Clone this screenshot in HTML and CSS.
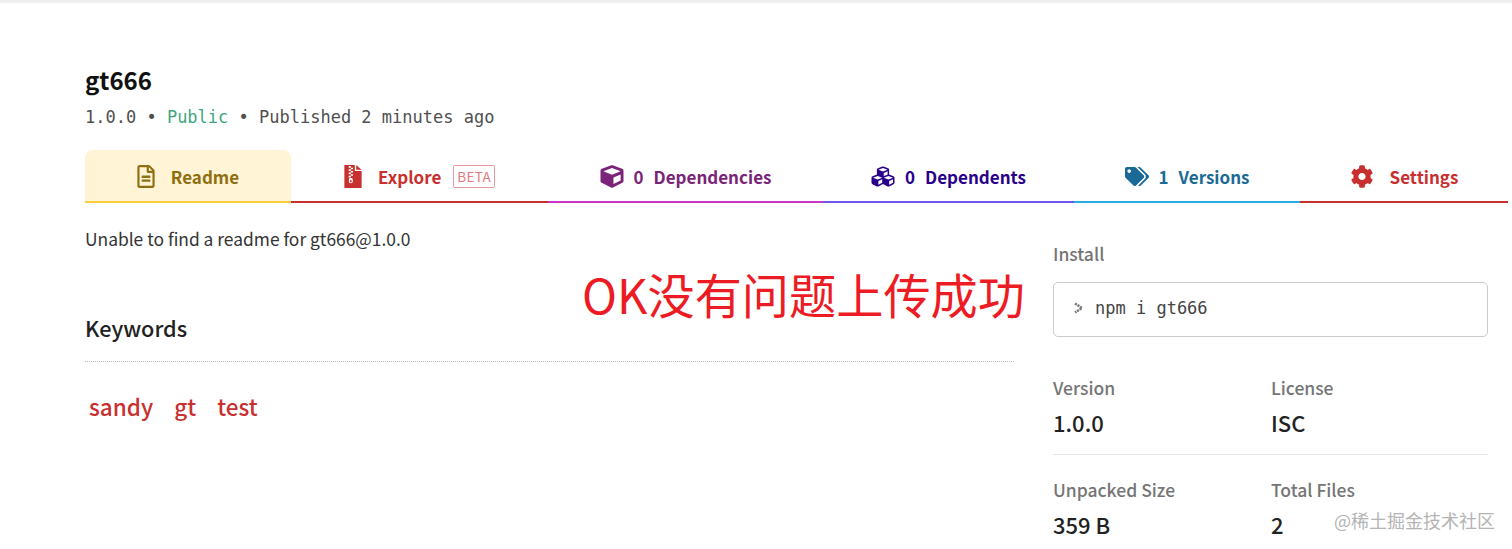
FILE: index.html
```html
<!DOCTYPE html>
<html lang="en">
<head>
  <meta charset="UTF-8">
  <meta name="viewport" content="width=device-width, initial-scale=1.0">
  <title>gt666</title>
  <link rel="stylesheet" href="styles.css">
</head>
<body>
  <div class="top-line"></div>
  <div class="page">
    <header class="pkg-header">
      <h1>gt666</h1>
      <p class="pkg-meta">1.0.0 • <span class="public">Public</span> • Published 2 minutes ago</p>
    </header>

    <nav class="tabs">
      <a class="tab tab-readme">
        <svg class="ic" viewBox="0 0 384 512"><path fill="currentColor" d="M288 248v28c0 6.6-5.4 12-12 12H108c-6.6 0-12-5.4-12-12v-28c0-6.6 5.4-12 12-12h168c6.6 0 12 5.4 12 12zm-12 72H108c-6.6 0-12 5.4-12 12v28c0 6.6 5.4 12 12 12h168c6.6 0 12-5.4 12-12v-28c0-6.6-5.4-12-12-12zm108-188.1V464c0 26.5-21.5 48-48 48H48c-26.5 0-48-21.5-48-48V48C0 21.5 21.5 0 48 0h204.1C264.8 0 277 5.1 286 14.1L369.9 98c9 8.9 14.1 21.2 14.1 33.9zm-128-80V128h76.1L256 51.9zM336 464V176H232c-13.3 0-24-10.7-24-24V48H48v416h288z"/></svg>
        <span class="tab-label gap-wide">Readme</span>
      </a>
      <a class="tab tab-explore">
        <svg class="ic" viewBox="0 0 384 512">
          <path fill="currentColor" d="M0 0H232V136H384V512H0zM264 0L384 104H264z"/>
          <path fill="#fff" d="M96 24h48v36H96zM144 60h48v36h-48zM96 96h48v36H96zM144 132h48v36h-48zM96 168h48v36H96zM144 204h48v36h-48zM96 240h48v36H96z"/>
          <path fill="#fff" fill-rule="evenodd" d="M112 290h64l14 62c6 30-16 54-46 54s-52-24-46-54zM144 342a22 22 0 1 0 .01 0z"/>
        </svg>
        <span class="tab-label gap-wide">Explore</span>
        <span class="beta">BETA</span>
      </a>
      <a class="tab tab-deps">
        <svg class="ic ic-box" viewBox="0 0 512 512"><path fill="currentColor" d="M239.1 6.3l-208 78c-18.7 7-31.1 25-31.1 45v225.1c0 18.2 10.3 34.8 26.5 42.9l208 104c13.5 6.8 29.4 6.8 42.9 0l208-104c16.3-8.1 26.5-24.8 26.5-42.9V129.3c0-20-12.4-37.9-31.1-44.9l-208-78C262 2.2 250 2.2 239.1 6.3zM256 68.4l192 72v1.1l-192 78-192-78v-1.1l192-72zm32 356V275.5l160-65v133.9l-160 80z"/></svg>
        <span class="count">0</span>
        <span class="tab-label">Dependencies</span>
      </a>
      <a class="tab tab-dependents">
        <svg class="ic ic-box" viewBox="0 0 512 512"><path fill="currentColor" d="M488.6 250.2L392 214V105.5c0-15-9.3-28.4-23.4-33.7l-100-37.5c-8.1-3.1-17.1-3.1-25.3 0l-100 37.5c-14.1 5.3-23.4 18.7-23.4 33.7V214l-96.600 36.2C9.3 255.5 0 268.9 0 283.9V394c0 13.6 7.7 26.1 19.9 32.2l100 50c10.1 5.1 22.1 5.1 32.2 0l103.9-52 103.9 52c10.1 5.1 22.1 5.1 32.2 0l100-50c12.2-6.1 19.9-18.6 19.9-32.2V283.9c0-15-9.3-28.4-23.4-33.7zM358 214.8l-85 31.9v-68.2l85-37v73.3zM154 104.1l102-38.2 102 38.2v.6l-102 41.4-102-41.4v-.6zm84 291.1l-85 42.5v-79.1l85-38.8v75.4zm0-112l-102 41.4-102-41.4v-.6l102-38.2 102 38.2v.6zm240 112l-85 42.5v-79.1l85-38.8v75.4zm0-112l-102 41.4-102-41.4v-.6l102-38.2 102 38.2v.6z"/></svg>
        <span class="count">0</span>
        <span class="tab-label">Dependents</span>
      </a>
      <a class="tab tab-versions">
        <svg class="ic ic-box" viewBox="0 0 640 512"><path fill="currentColor" d="M497.941 225.941L286.059 14.059A48 48 0 0 0 252.118 0H48C21.49 0 0 21.49 0 48v204.118a48 48 0 0 0 14.059 33.941l211.882 211.882c18.744 18.745 49.136 18.746 67.882 0l204.118-204.118c18.745-18.745 18.745-49.137 0-67.882zM112 160c-26.51 0-48-21.49-48-48s21.49-48 48-48 48 21.49 48 48-21.49 48-48 48zm513.941 133.823L421.823 497.941c-18.745 18.745-49.137 18.745-67.882 0l-.36-.36L527.64 323.522c16.999-16.999 26.36-39.6 26.36-63.64s-9.362-46.641-26.36-63.64L331.397 0h48.721a48 48 0 0 1 33.941 14.059l211.882 211.882c18.745 18.745 18.745 49.137 0 67.882z"/></svg>
        <span class="count">1</span>
        <span class="tab-label">Versions</span>
      </a>
      <a class="tab tab-settings">
        <svg class="ic ic-box" viewBox="0 0 512 512"><path fill="currentColor" d="M487.4 315.7l-42.6-24.6c4.3-23.2 4.3-47 0-70.2l42.6-24.6c4.9-2.8 7.1-8.6 5.5-14-11.1-35.6-30-67.8-54.7-94.6-3.8-4.1-10-5.1-14.8-2.3L380.8 110c-17.9-15.4-38.5-27.3-60.8-35.1V25.8c0-5.6-3.9-10.5-9.4-11.7-36.7-8.2-74.3-7.8-109.2 0-5.5 1.2-9.4 6.1-9.4 11.7V75c-22.2 7.9-42.8 19.8-60.8 35.1L88.7 85.5c-4.9-2.8-11-1.9-14.8 2.3-24.7 26.7-43.6 58.9-54.7 94.6-1.7 5.4.6 11.2 5.5 14L67.3 221c-4.3 23.2-4.3 47 0 70.2l-42.6 24.6c-4.9 2.8-7.1 8.6-5.5 14 11.1 35.6 30 67.8 54.7 94.6 3.8 4.1 10 5.1 14.8 2.3l42.6-24.6c17.9 15.4 38.5 27.3 60.8 35.1v49.2c0 5.6 3.9 10.5 9.4 11.7 36.7 8.2 74.3 7.8 109.2 0 5.5-1.2 9.4-6.1 9.4-11.7v-49.2c22.2-7.9 42.8-19.8 60.8-35.1l42.6 24.6c4.9 2.8 11 1.9 14.8-2.3 24.7-26.7 43.6-58.9 54.7-94.6 1.5-5.5-.7-11.3-5.6-14.1zM256 336c-44.1 0-80-35.9-80-80s35.9-80 80-80 80 35.9 80 80-35.9 80-80 80z"/></svg>
        <span class="tab-label gap-wide">Settings</span>
      </a>
    </nav>

    <div class="columns">
      <main class="main-col">
        <p class="readme-msg">Unable to find a readme for gt666@1.0.0</p>
        <h2 class="keywords-title">Keywords</h2>
        <ul class="keywords">
          <li>sandy</li>
          <li>gt</li>
          <li>test</li>
        </ul>
      </main>

      <aside class="side-col">
        <h3 class="side-label">Install</h3>
        <div class="install-box">
          <svg class="prompt" viewBox="0 0 12 12"><path d="M2 1.500L9 6l-7 4.500" fill="none" stroke="#777" stroke-width="2.400" stroke-dasharray="2.200 .8"/></svg>
          <code>npm i gt666</code>
        </div>
        <div class="stats stats-first">
          <div>
            <h3 class="side-label">Version</h3>
            <p class="stat-value">1.0.0</p>
          </div>
          <div>
            <h3 class="side-label">License</h3>
            <p class="stat-value">ISC</p>
          </div>
        </div>
        <div class="stats">
          <div>
            <h3 class="side-label">Unpacked Size</h3>
            <p class="stat-value">359 B</p>
          </div>
          <div>
            <h3 class="side-label">Total Files</h3>
            <p class="stat-value">2</p>
          </div>
        </div>
      </aside>
    </div>
  </div>

  <div class="note">OK没有问题上传成功</div>
  <div class="watermark">@稀土掘金技术社区</div>
</body>
</html>
```

FILE: styles.css
```css
html, body {
  height: 549px;
  overflow: hidden;
}
body {
  margin: 0;
  background: #fff;
  color: #222;
  font-family: "Noto Sans CJK SC", "Open Sans", sans-serif;
  position: relative;
}
h1, h2, h3, p, ul {
  margin: 0;
  padding: 0;
}
.top-line {
  height: 3px;
  background: #eeeeee;
}
.page {
  padding: 61px 4px 0 85px;
}
.pkg-header h1 {
  font-size: 24px;
  line-height: 32px;
  font-weight: 600;
  color: #111;
}
.pkg-meta {
  margin-top: 9px;
  font-family: "DejaVu Sans Mono", monospace;
  font-size: 17px;
  line-height: 24px;
  color: #4f4f4f;
}
.public {
  color: #3fa681;
}
.tabs {
  margin-top: 21px;
  display: grid;
  grid-template-columns: 206px 257px 275px 251px 226px 208px;
  height: 53px;
}
.tab {
  display: flex;
  align-items: center;
  justify-content: center;
  border-bottom: 2px solid;
  font-size: 17px;
  font-weight: 600;
  padding-top: 2px;
  box-sizing: border-box;
}
.ic {
  width: 18px;
  height: 23px;
}
.ic-box {
  width: 24px;
}
.count {
  margin-left: 10px;
  margin-right: 10px;
}
.gap-wide {
  margin-left: 16px;
}
.tab-readme {
  background: #fff4d6;
  color: #8f6f0f;
  border-color: #ffcd3a;
  border-radius: 8px 8px 0 0;
}
.tab-explore {
  color: #c8302f;
  border-color: #c8302f;
}
.beta {
  margin-left: 12px;
  padding: 0 3px;
  font-size: 13.500px;
  font-weight: 400;
  line-height: 21px;
  letter-spacing: .3px;
  color: #e07a80;
  border: 1px solid #e89aa0;
  border-radius: 2px;
}
.tab-deps {
  color: #7a2479;
  border-color: #c836c3;
}
.tab-dependents {
  color: #29008a;
  border-color: #7057f0;
}
.tab-versions {
  color: #1b6a96;
  border-color: #29abe2;
}
.tab-settings {
  color: #c8302f;
  border-color: #c8302f;
}
.columns {
  display: flex;
  padding-right: 20px;
}
.main-col {
  width: 929px;
  padding-top: 22px;
}
.readme-msg {
  font-size: 17.400px;
  line-height: 28px;
  color: #333;
}
.keywords-title {
  margin-top: 59px;
  padding-bottom: 17px;
  font-size: 21.700px;
  line-height: 32px;
  font-weight: 500;
  color: #222;
  border-bottom: 1px dotted #bbb;
}
.keywords {
  list-style: none;
  display: flex;
  gap: 21px;
  margin-top: 26px;
  padding-left: 4px;
  font-size: 22.500px;
  line-height: 36px;
  font-weight: 500;
  color: #c8302f;
}
.side-col {
  width: 435px;
  margin-left: 39px;
  padding-top: 37px;
}
.side-label {
  font-size: 17.500px;
  line-height: 28px;
  font-weight: 500;
  color: #757575;
}
.install-box {
  margin-top: 14px;
  height: 55px;
  box-sizing: border-box;
  display: flex;
  align-items: center;
  padding: 0 0 3px 19px;
  border: 1px solid #cccccc;
  border-radius: 5px;
}
.prompt {
  width: 12px;
  height: 12px;
  margin-right: 10px;
}
.install-box code {
  font-family: "DejaVu Sans Mono", monospace;
  font-size: 17px;
  color: #444;
}
.stats {
  display: grid;
  grid-template-columns: 218px 1fr;
}
.stats-first {
  padding-top: 37px;
  padding-bottom: 16px;
  border-bottom: 1px solid #e6e6e6;
}
.stats-first + .stats {
  padding-top: 21px;
}
.stat-value {
  margin-top: 4px;
  font-size: 22px;
  line-height: 32px;
  font-weight: 500;
  color: #222;
}
.note {
  position: absolute;
  left: 582px;
  top: 259px;
  font-size: 47.200px;
  line-height: 70px;
  color: #ed1c24;
  white-space: nowrap;
}
.watermark {
  position: absolute;
  left: 1334px;
  top: 507px;
  font-size: 18px;
  line-height: 26px;
  color: #b4b4b4;
  white-space: nowrap;
}
```
